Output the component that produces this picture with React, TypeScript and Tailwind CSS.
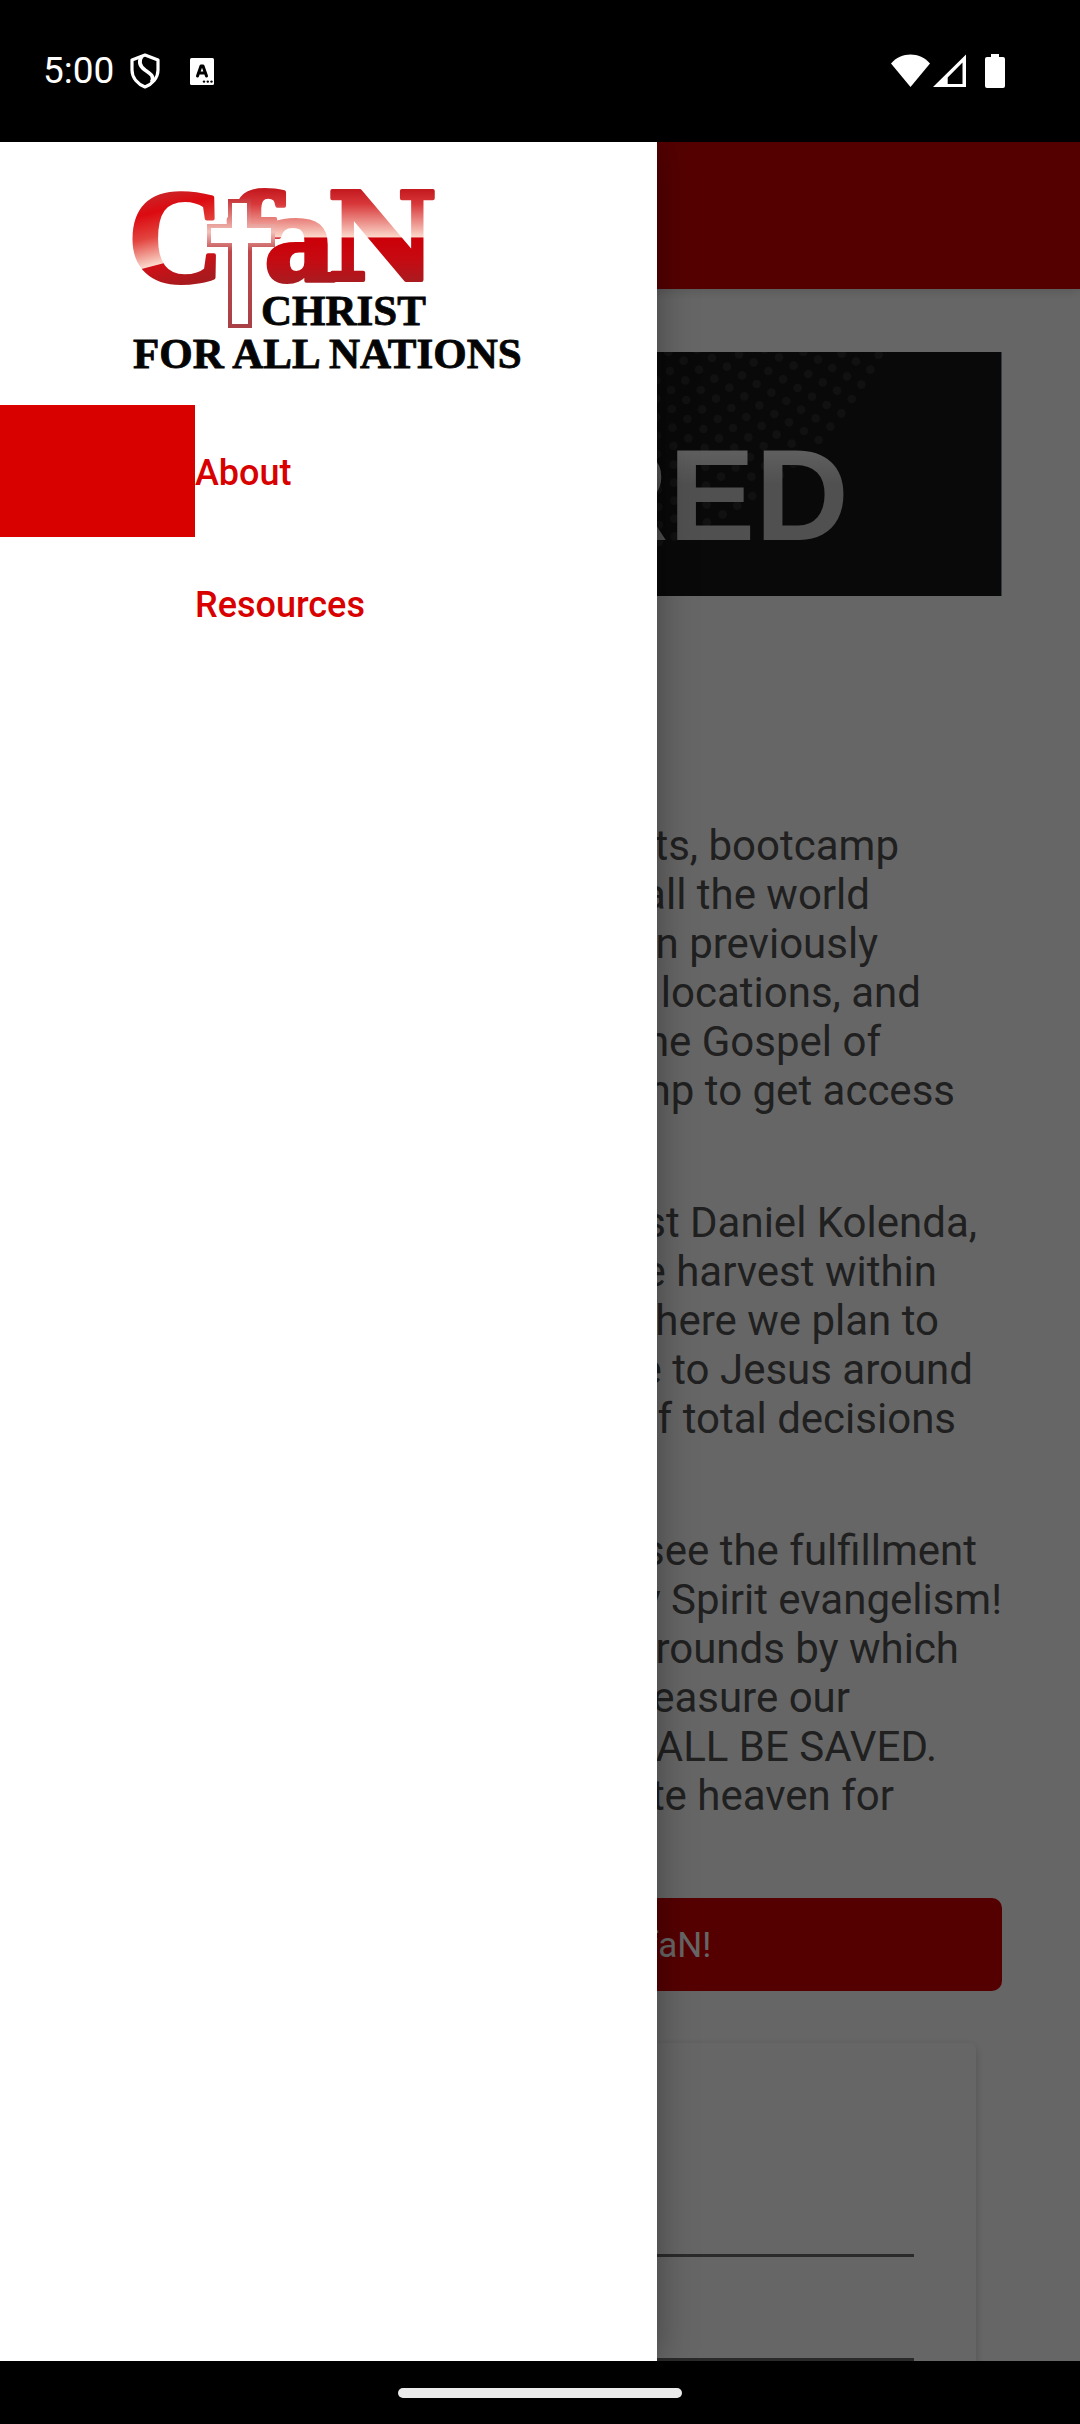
type Line = { text: string; trail: number };

/* Body copy: each line with the free space left after it, in pixels. */
const paragraphs: Line[][] = [
  [
    { text: 'ts, bootcamp', trail: 103 },
    { text: 'all the world', trail: 132 },
    { text: 'n previously', trail: 124 },
    { text: 'locations, and', trail: 81 },
    { text: 'he Gospel of', trail: 121 },
    { text: 'mp to get access', trail: 47 },
  ],
  [
    { text: 'st Daniel Kolenda,', trail: 25 },
    { text: 'e harvest within', trail: 65 },
    { text: 'here we plan to', trail: 63 },
    { text: 'e to Jesus around', trail: 29 },
    { text: 'f total decisions', trail: 46 },
  ],
  [
    { text: 'see the fulfillment', trail: 25 },
    { text: 'y Spirit evangelism!', trail: 0 },
    { text: 'rounds by which', trail: 43 },
    { text: 'easure our', trail: 152 },
    { text: 'ALL BE SAVED.', trail: 65 },
    { text: 'te heaven for', trail: 108 },
  ],
];

/* Halftone dots of the banner, [x, y]. */
const dots: [number, number][] = [
  [88, 276], [174, 268], [219, 294], [300, 283], [376, 268], [420, 292], [493, 276], [537, 299], [608, 281], [651, 304], [719, 285],
  [134, 302], [180, 329], [264, 320], [344, 307], [388, 333], [464, 317], [508, 342], [580, 324], [624, 349], [694, 329],
  [93, 333], [139, 361], [226, 356], [309, 346], [353, 372], [432, 358], [476, 384], [551, 367], [594, 392], [667, 374],
  [52, 361], [96, 390], [185, 390], [271, 383], [316, 409], [397, 398], [442, 423], [519, 410], [563, 435], [638, 417],
  [52, 416], [142, 420], [231, 416], [361, 436], [486, 449], [607, 460], [98, 447], [189, 448], [277, 444], [406, 462], [530, 475],
  [52, 471], [145, 477], [236, 477], [322, 471], [450, 487], [574, 500], [100, 503], [193, 507], [282, 504], [368, 498], [495, 513],
  [54, 527], [148, 535], [240, 535], [328, 532], [413, 524], [539, 540], [103, 558], [197, 564], [286, 563], [374, 558], [458, 551],
  [54, 582], [150, 591], [244, 594], [333, 591], [104, 614], [199, 620], [290, 622], [378, 618], [464, 611],
  [56, 688], [246, 650], [337, 650], [423, 646], [105, 668], [201, 677], [106, 722], [340, 708], [203, 733], [295, 737],
  [58, 741], [106, 776], [251, 763], [204, 787], [60, 795], [107, 829], [60, 846],
];

function StatusBar() {
  return (
    <header className="flex h-[142px] shrink-0 items-center justify-between bg-black pr-[75px] pl-[43px] text-white">
      <div className="flex items-center">
        <time className="text-[37px] leading-[44px]">5:00</time>
        <svg className="ml-4 h-9 w-[30px]" viewBox="0 0 30 36" fill="none" stroke="white" aria-hidden="true">
          <path d="M15 2 L2 7 V17 C2 25 8 31 15 34 C22 31 28 25 28 17 V7 Z" strokeWidth="3.2" strokeLinejoin="round" />
          <path d="M12 3 C8.500 8 9.500 13 15 17 C21 21 24.500 23 21.500 29" strokeWidth="3.600" />
        </svg>
        <svg className="ml-[30px] h-[27px] w-6" viewBox="0 0 24 27" aria-hidden="true">
          <rect width="24" height="27" rx="1.500" fill="white" />
          <path d="M7.500 18 L11 8 H13 L16.500 18 M9 15 H15" fill="none" stroke="black" strokeWidth="3" strokeLinecap="round" strokeLinejoin="round" />
          <circle cx="14" cy="23.600" r="1.200" />
          <circle cx="17.800" cy="23.600" r="1.200" />
          <circle cx="21.500" cy="23.600" r="1.200" />
        </svg>
      </div>
      <div className="flex items-center">
        <svg className="h-[34px] w-[39px]" viewBox="0 0 39 34" fill="white" aria-hidden="true">
          <path d="M19.500 33 L0 9.500 C10 -2.500 29 -2.500 39 9.500 Z" />
        </svg>
        <svg className="ml-[3px] h-[34px] w-[33px]" viewBox="0 0 33 34" fill="white" aria-hidden="true">
          <path fillRule="evenodd" d="M33 0.500 V33 H0 Z M29.500 8.500 L14.700 23.500 V30 H29.500 Z" />
        </svg>
        <svg className="ml-[19px] h-[34px] w-5" viewBox="0 0 20 34" fill="white" aria-hidden="true">
          <path d="M6 0 H14 V3 H18 Q20 3 20 5 V32 Q20 34 18 34 H2 Q0 34 0 32 V5 Q0 3 2 3 H6 Z" />
        </svg>
      </div>
    </header>
  );
}

function Logo() {
  return (
    <svg className="ml-[110px] h-[220px] w-[440px]" viewBox="0 0 440 220" role="img" aria-label="CfaN Christ for all Nations">
      <defs>
        <linearGradient id="gc" gradientUnits="userSpaceOnUse" x1="46" y1="22" x2="70" y2="114">
          <stop offset="0" stopColor="#c9272b" />
          <stop offset="0.2" stopColor="#dc0a10" />
          <stop offset="0.45" stopColor="#e2453f" />
          <stop offset="0.74" stopColor="#fbd9cc" />
          <stop offset="0.75" stopColor="#cf1016" />
          <stop offset="1" stopColor="#a81a1e" />
        </linearGradient>
        <linearGradient id="gn" gradientUnits="userSpaceOnUse" x1="0" y1="20" x2="0" y2="113">
          <stop offset="0" stopColor="#c41a20" />
          <stop offset="0.15" stopColor="#d8383a" />
          <stop offset="0.5" stopColor="#fbd5c8" />
          <stop offset="0.52" stopColor="#cc0008" />
          <stop offset="0.75" stopColor="#c60a12" />
          <stop offset="1" stopColor="#a81c20" />
        </linearGradient>
        <linearGradient id="gx" gradientUnits="userSpaceOnUse" x1="0" y1="30" x2="0" y2="158">
          <stop offset="0" stopColor="#c8383c" />
          <stop offset="0.25" stopColor="#f3c0b8" />
          <stop offset="0.4" stopColor="#c0484c" />
          <stop offset="1" stopColor="#a84045" />
        </linearGradient>
        <clipPath id="cf">
          <rect x="90" y="0" width="100" height="62" />
        </clipPath>
      </defs>
      <g fontWeight="700" strokeWidth="4" strokeLinejoin="round">
        <text x="18" y="112" fontFamily="'Liberation Serif', serif" fontSize="133" fill="url(#gc)" stroke="url(#gc)">C</text>
        <g clipPath="url(#cf)">
          <text x="115" y="113" fontFamily="'DejaVu Serif', serif" fontSize="122" fill="url(#gn)" stroke="url(#gn)">f</text>
        </g>
        <text x="154" y="110" fontFamily="'DejaVu Serif', serif" fontSize="112" fill="url(#gn)" stroke="url(#gn)">a</text>
        <text x="217" y="110" fontFamily="'DejaVu Serif', serif" fontSize="121" fill="url(#gn)" stroke="url(#gn)">N</text>
      </g>
      <path d="M120 31 H139 V56 H163 V75 H140 V156 H120 V75 H99 V56 H120 Z" fill="white" stroke="url(#gx)" strokeWidth="4" />
      <g fontFamily="'Liberation Serif', serif" fontWeight="700" fontSize="43" fill="#050505" stroke="#050505" strokeWidth="0.800">
        <text x="151" y="155">CHRIST</text>
        <text x="23" y="198">FOR ALL NATIONS</text>
      </g>
    </svg>
  );
}

function Drawer() {
  return (
    <aside className="absolute inset-y-0 left-0 w-[657px] max-w-full bg-white pt-7 shadow-[0_0_36px_rgba(0,0,0,0.35)]">
      <Logo />
      <nav className="mt-[15px] flex flex-col text-[36px] font-medium text-[#d90000]">
        <a href="#about" className="flex h-[132px]">
          <span className="w-[195px] bg-[#d90000]" />
          <span className="self-center pt-1">About</span>
        </a>
        <a href="#resources" className="flex h-[132px] pl-[195px]">
          <span className="self-center pt-1">Resources</span>
        </a>
      </nav>
    </aside>
  );
}

function Banner() {
  return (
    <div className="relative flex h-[244px] items-center justify-end overflow-hidden border-r border-[#8093a8] bg-[#171717] pr-[152px]">
      <svg className="absolute top-0 right-0 h-[244px] w-[345px]" viewBox="51 276 1035 732" fill="#2b2b2b" aria-hidden="true">
        {dots.map(([x, y]) => (
          <circle key={`${x}-${y}`} cx={x} cy={y} r="13" />
        ))}
      </svg>
      <h1 className="relative bg-linear-to-b from-white from-30% to-[#c9c9c9] to-55% bg-clip-text pt-[42px] font-['Liberation_Sans',sans-serif] text-[130px] leading-[148px] font-bold text-transparent">
        RED
      </h1>
    </div>
  );
}

export default function App() {
  return (
    <div className="flex h-screen flex-col overflow-hidden bg-black font-[Roboto,sans-serif]">
      <StatusBar />
      <div className="relative min-h-0 flex-1 overflow-hidden bg-white">
        <div className="relative h-[147px] bg-[#d50000] shadow-[0_2px_10px_rgba(0,0,0,0.15)]" />
        <main className="px-[78px] pt-[63px]">
          <Banner />
          <div className="mt-[225px] flex flex-col gap-[83px] text-right text-[42px] leading-[49px] whitespace-nowrap text-[#525252]">
            {paragraphs.map((lines, i) => (
              <p key={i}>
                {lines.map((line) => (
                  <span key={line.text} className="block" style={{ paddingRight: line.trail }}>
                    {line.text}
                  </span>
                ))}
              </p>
            ))}
          </div>
          <button type="button" className="mt-[78px] flex h-[93px] w-full items-center rounded-[10px] bg-[#d50000] pt-1 pl-[568px] text-[35px] text-white">
            faN!
          </button>
          <form className="mx-[26px] mt-[52px] flex flex-col rounded-md bg-white px-[62px] pt-[110px] pb-16 shadow-[0_3px_9px_rgba(0,0,0,0.2)]">
            <input type="text" aria-label="First field" className="h-[104px] border-b-3 border-[#696969] bg-transparent outline-none" />
            <input type="text" aria-label="Second field" className="h-[104px] border-b-3 border-[#696969] bg-transparent outline-none" />
          </form>
        </main>
        <div className="absolute inset-0 bg-black/60" />
        <Drawer />
      </div>
      <footer className="flex h-[63px] shrink-0 items-center justify-center bg-black">
        <div className="h-2.5 w-[284px] rounded-full bg-[#ebebeb]" />
      </footer>
    </div>
  );
}
